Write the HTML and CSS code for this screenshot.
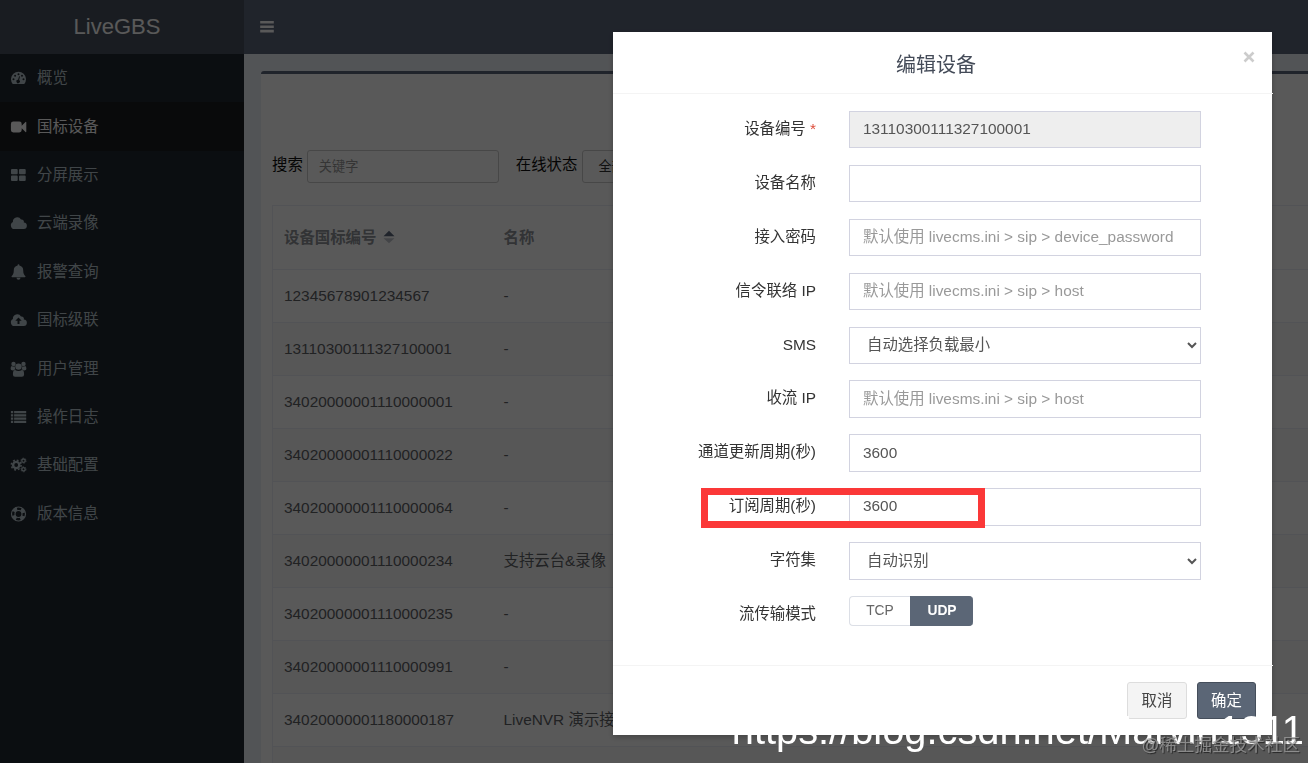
FILE: index.html
```
<!DOCTYPE html>
<html lang="zh-CN">
<head>
    <meta charset="utf-8" />
    <meta name="viewport" content="width=device-width, initial-scale=1" />
    <title>LiveGBS</title>
    <link rel="stylesheet" href="styles.css">
</head>
<body>
    <div class="wrapper">
        <aside class="sidebar">
            <a class="logo">LiveGBS</a>
            <ul class="menu">
                <li>
                    <svg class="icon" viewBox="0 0 16 16"><path fill-rule="evenodd" d="M2.2 14A7.5 7.5 0 1 1 13.8 14zM3 8.3a1 1 0 1 0 0 2 1 1 0 0 0 0-2zM4.6 4.8a1 1 0 1 0 0 2 1 1 0 0 0 0-2zM8 3.2a1 1 0 1 0 0 2 1 1 0 0 0 0-2zM11.5 4.8a1 1 0 1 0 0 2 1 1 0 0 0 0-2zM13 8.3a1 1 0 1 0 0 2 1 1 0 0 0 0-2zM8.6 6.2L7.6 9.8a1.7 1.7 0 1 0 1 .3L9.5 6.5z"/></svg>
                    <span>概览</span>
                </li>
                <li class="active">
                    <svg class="icon" viewBox="0 0 16 16"><path d="M2.800 2.600h6a2.400 2.400 0 0 1 2.400 2.400v1.700L15 3q.8-.5.8.4v9.200q0 .9-.8.4l-3.800-3.700V11a2.400 2.400 0 0 1-2.400 2.400h-6A2.400 2.400 0 0 1 .4 11V5a2.400 2.400 0 0 1 2.400-2.400z"/></svg>
                    <span>国标设备</span>
                </li>
                <li>
                    <svg class="icon" viewBox="0 0 16 16"><path d="M1.500 2h4.700q1 0 1 1v3.300q0 1-1 1H1.500q-1 0-1-1V3q0-1 1-1zM9.500 2h4.700q1 0 1 1v3.300q0 1-1 1H9.500q-1 0-1-1V3q0-1 1-1zM1.500 8.600h4.700q1 0 1 1V13q0 1-1 1H1.500q-1 0-1-1V9.600q0-1 1-1zM9.500 8.600h4.700q1 0 1 1V13q0 1-1 1H9.500q-1 0-1-1V9.600q0-1 1-1z"/></svg>
                    <span>分屏展示</span>
                </li>
                <li>
                    <svg class="icon" viewBox="0 0 16 16"><path d="M4 14A3.700 3.700 0 0 1 2.400 7 4.300 4.300 0 0 1 10.500 4.600 2.300 2.300 0 0 1 13.300 7.600 3.200 3.200 0 0 1 13 14z"/></svg>
                    <span>云端录像</span>
                </li>
                <li>
                    <svg class="icon" viewBox="0 0 16 16"><path d="M8 .3q1 0 .9 1.200C11.600 2 12.700 4 12.700 6.200c0 3.200.9 4.900 2.300 6 0 .7-.4 1.100-1 1.100H2c-.6 0-1-.4-1-1.100 1.400-1.100 2.300-2.800 2.300-6C3.300 4 4.400 2 7.100 1.500Q7 .3 8 .3zM6 13.800h4a2 2 0 0 1-4 0z"/></svg>
                    <span>报警查询</span>
                </li>
                <li>
                    <svg class="icon" viewBox="0 0 16 16"><path fill-rule="evenodd" d="M4 14A3.700 3.700 0 0 1 2.400 7 4.300 4.300 0 0 1 10.500 4.600 2.300 2.300 0 0 1 13.300 7.600 3.200 3.200 0 0 1 13 14zM8 5.400L4.800 8.700h2.200V12h2V8.700h2.200z"/></svg>
                    <span>国标级联</span>
                </li>
                <li>
                    <svg class="icon" viewBox="0 0 16 16"><circle cx="3" cy="2.900" r="2.200"/><circle cx="13" cy="2.900" r="2.200"/><circle cx="8" cy="5.600" r="3.200"/><path d="M.1 8q0-3 1.300-3 1.400.9 3 .4-.3 1.900.7 3-1.400 0-2.300 1-2.700.1-2.700-1.400zM15.900 8q0-3-1.300-3-1.400.9-3 .4.3 1.900-.7 3 1.400 0 2.300 1 2.700.1 2.700-1.400zM4.600 9q3.400 2 6.800 0 2.200 0 2.200 4.400 0 2.300-2.200 2.300H4.600q-2.200 0-2.200-2.300Q2.400 9 4.600 9z"/></svg>
                    <span>用户管理</span>
                </li>
                <li>
                    <svg class="icon" viewBox="0 0 16 16"><path d="M.4 2h2.300v2.200H.4zM3.600 2h12.100v2.200H3.600zM.4 5.200h2.300v2.300H.4zM3.600 5.200h12.100v2.300H3.600zM.4 8.500h2.300v2.300H.4zM3.600 8.500h12.100v2.300H3.600zM.4 11.800h2.300V14H.4zM3.600 11.800h12.100V14H3.600z"/></svg>
                    <span>操作日志</span>
                </li>
                <li>
                    <svg class="icon line" viewBox="0 0 16 16"><circle cx="5.700" cy="8" r="3.100" stroke-width="2.400"/><circle cx="5.700" cy="8" r="4.900" stroke-width="1.500" stroke-dasharray="1.920 1.920"/><circle cx="13" cy="3.700" r="1.700" stroke-width="1.400"/><circle cx="13" cy="3.700" r="2.600" stroke-width=".8" stroke-dasharray="1.360 1.360"/><circle cx="13" cy="12.300" r="1.700" stroke-width="1.400"/><circle cx="13" cy="12.300" r="2.600" stroke-width=".8" stroke-dasharray="1.360 1.360"/></svg>
                    <span>基础配置</span>
                </li>
                <li>
                    <svg class="icon line" viewBox="0 0 16 16"><circle cx="8" cy="8" r="7" stroke-width="1.200"/><circle cx="8" cy="8" r="3.500" stroke-width="1.200"/><circle cx="8" cy="8" r="5.300" stroke-width="3.200" stroke-dasharray="4.160 4.160" stroke-dashoffset="-2.080"/></svg>
                    <span>版本信息</span>
                </li>
            </ul>
        </aside>

        <div class="main">
            <header class="navbar">
                <svg class="toggle" viewBox="0 0 14 12"><path d="M.2 0h13.600v2.600H.2zM.2 4.400h13.600V7H.2zM.2 8.800h13.600v2.600H.2z"/></svg>
            </header>
            <section class="box">
                <div class="filters">
                    <label for="keyword">搜索</label>
                    <input type="text" id="keyword" class="keyword" placeholder="关键字" />
                    <label for="online">在线状态</label>
                    <select id="online" class="online"><option>全部</option></select>
                </div>
                <div class="table">
                    <div class="tr th">
                        <div class="td">设备国标编号
                            <svg class="sort" viewBox="0 0 12 14"><path class="asc" d="M.5 6.200L6 .7l5.500 5.500z"/><path class="desc" d="M.5 8.200h11L6 13.200z"/></svg>
                        </div>
                        <div class="td name">名称</div>
                    </div>
                    <div class="tr"><div class="td">12345678901234567</div><div class="td">-</div></div>
                    <div class="tr"><div class="td">13110300111327100001</div><div class="td">-</div></div>
                    <div class="tr"><div class="td">34020000001110000001</div><div class="td">-</div></div>
                    <div class="tr"><div class="td">34020000001110000022</div><div class="td">-</div></div>
                    <div class="tr"><div class="td">34020000001110000064</div><div class="td">-</div></div>
                    <div class="tr"><div class="td">34020000001110000234</div><div class="td">支持云台&amp;录像</div></div>
                    <div class="tr"><div class="td">34020000001110000235</div><div class="td">-</div></div>
                    <div class="tr"><div class="td">34020000001110000991</div><div class="td">-</div></div>
                    <div class="tr"><div class="td">34020000001180000187</div><div class="td">LiveNVR 演示接</div></div>
                    <div class="tr"></div>
                </div>
            </section>
        </div>
    </div>

    <div class="backdrop"></div>

    <div class="modal">
        <div class="modal-header">
            <h4>编辑设备</h4>
            <button class="close" aria-label="Close"><svg viewBox="0 0 12 12"><path d="M1.500 1.500l9 9M10.500 1.500l-9 9"/></svg></button>
        </div>
        <div class="modal-body">
            <div class="form-group">
                <label>设备编号 <span class="required">*</span></label>
                <input class="form-control" type="text" value="13110300111327100001" disabled />
            </div>
            <div class="form-group">
                <label>设备名称</label>
                <input class="form-control" type="text" />
            </div>
            <div class="form-group">
                <label>接入密码</label>
                <input class="form-control" type="text" placeholder="默认使用 livecms.ini &gt; sip &gt; device_password" />
            </div>
            <div class="form-group">
                <label>信令联络 IP</label>
                <input class="form-control" type="text" placeholder="默认使用 livecms.ini &gt; sip &gt; host" />
            </div>
            <div class="form-group">
                <label>SMS</label>
                <select class="form-control"><option>自动选择负载最小</option></select>
            </div>
            <div class="form-group">
                <label>收流 IP</label>
                <input class="form-control" type="text" placeholder="默认使用 livesms.ini &gt; sip &gt; host" />
            </div>
            <div class="form-group">
                <label>通道更新周期(秒)</label>
                <input class="form-control" type="text" value="3600" />
            </div>
            <div class="form-group">
                <label>订阅周期(秒)</label>
                <input class="form-control" type="text" value="3600" />
                <div class="highlight"></div>
            </div>
            <div class="form-group">
                <label>字符集</label>
                <select class="form-control"><option>自动识别</option></select>
            </div>
            <div class="form-group">
                <label>流传输模式</label>
                <div class="switch">
                    <span>TCP</span>
                    <span class="on">UDP</span>
                </div>
            </div>
        </div>
        <div class="modal-footer">
            <button class="btn">取消</button>
            <button class="btn btn-primary">确定</button>
        </div>
    </div>

    <div class="watermark">https://blog.csdn.net/Marvin1311</div>
    <div class="community">@稀土掘金技术社区</div>
</body>
</html>
```
FILE: styles.css
```
* { box-sizing: border-box; margin: 0; padding: 0; }
body {
    height: 763px;
    overflow: hidden;
    font-family: "Liberation Sans", "Noto Sans CJK SC", sans-serif;
    font-size: 15.4px;
    line-height: 22px;
    color: #333;
}
input, select, button {
    font-family: inherit;
    font-size: inherit;
}
.wrapper {
    display: flex;
    height: 763px;
    background: #ecf0f5;
}

/* sidebar */
.sidebar {
    width: 244px;
    flex: none;
    background: #222831;
}
.logo {
    display: block;
    height: 54px;
    line-height: 53px;
    padding-right: 10px;
    text-align: center;
    font-size: 22px;
    color: #fff;
    background: #48525e;
}
.menu {
    list-style: none;
}
.menu li {
    display: flex;
    align-items: center;
    height: 48.400px;
    padding-left: 10px;
    color: #b8c7ce;
}
.menu li.active {
    color: #fff;
    background: #1a1d20;
}
.icon {
    width: 17px;
    height: 16px;
    margin-right: 10px;
    fill: currentColor;
}
.icon.line {
    fill: none;
    stroke: currentColor;
}

/* content */
.main {
    flex: 1;
    min-width: 0;
}
.navbar {
    display: flex;
    align-items: center;
    height: 54px;
    padding-left: 16px;
    background: #5d677d;
}
.toggle {
    width: 14px;
    height: 12px;
    fill: #fff;
}
.box {
    height: 720px;
    margin: 17px 0 0 17px;
    padding: 76px 0 0 11px;
    background: #fff;
    border-top: 3px solid #5d677d;
    border-radius: 3px 0 0 0;
}
.filters {
    display: flex;
    height: 33px;
    line-height: 30px;
    color: #111;
}
.keyword, .online {
    height: 33px;
    padding: 0 11px;
    font-size: 13.200px;
    border: 1px solid #ccc;
    border-radius: 3px;
    background: #fff;
    color: #333;
}
.keyword {
    width: 192px;
    margin: 0 17px 0 4px;
}
.keyword::placeholder {
    color: #999;
}
.online {
    width: 120px;
    margin-left: 5px;
}
.table {
    margin-top: 22px;
    border-top: 1px solid #ebeef5;
    border-left: 1px solid #ebeef5;
}
.tr {
    display: flex;
    align-items: center;
    height: 53px;
    border-bottom: 1px solid #ebeef5;
    color: #606266;
}
.tr:nth-child(odd) {
    background: #fafafa;
}
.tr.th {
    height: 64px;
    background: #fff;
    font-weight: bold;
    color: #909399;
}
.td {
    display: flex;
    align-items: center;
    width: 219.500px;
    padding-left: 11px;
    white-space: nowrap;
}
.sort {
    width: 12px;
    height: 14px;
    margin: 0 0 2px 7px;
}
.sort .asc {
    fill: #5d677d;
}
.sort .desc {
    fill: #c0c4cc;
}

.backdrop {
    position: fixed;
    inset: 0;
    background: rgba(0, 0, 0, 0.65);
}

/* edit dialog */
.modal {
    position: fixed;
    left: 613px;
    top: 32px;
    width: 659px;
    height: 703px;
    background: #fff;
    box-shadow: 0 2px 6px rgba(0, 0, 0, 0.25);
}
.modal-header {
    display: flex;
    height: 62px;
    margin-right: -1px;
    padding-right: 14px;
    align-items: center;
    justify-content: center;
    border-bottom: 1px solid #f4f4f4;
}
.modal-header h4 {
    font-size: 20px;
    font-weight: normal;
    color: #444b58;
    padding-top: 4px;
}
.close {
    position: absolute;
    right: 17px;
    top: 19px;
    width: 12px;
    height: 12px;
    border: none;
    background: none;
}
.close svg {
    display: block;
    stroke: #ccc;
    stroke-width: 2.600;
}
.modal-body {
    height: 572px;
    padding-top: 17px;
    margin-right: -1px;
    border-bottom: 1px solid #f4f4f4;
}
.form-group {
    position: relative;
    display: flex;
    height: 37.400px;
    margin-bottom: 16.500px;
}
.form-group label {
    width: 203px;
    margin-right: 33px;
    line-height: 36px;
    text-align: right;
}
.required {
    color: #dd4b39;
}
.form-control {
    width: 352px;
    height: 37.400px;
    padding: 0 13px 1px;
    border: 1px solid #d2d3e0;
    border-radius: 0;
    background: #fff;
    color: #555;
}
.form-control:disabled {
    background: #eee;
}
.form-control::placeholder {
    color: #999;
}
.highlight {
    position: absolute;
    left: 88px;
    top: 0;
    width: 284px;
    height: 40px;
    border: 7px solid #fb3838;
}
.switch {
    display: flex;
    height: 30px;
    line-height: 27px;
    font-size: 13.800px;
    text-align: center;
    color: #666;
}
.switch span {
    width: 61px;
    border: 1px solid #dcdfe6;
    border-right: none;
    border-radius: 4px 0 0 4px;
}
.switch .on {
    width: 63px;
    color: #fff;
    font-weight: bold;
    background: #5b6676;
    border-color: #5b6676;
    border-radius: 0 4px 4px 0;
}
.modal-footer {
    display: flex;
    justify-content: flex-end;
    gap: 10px;
    padding: 16px 16px 0 0;
}
.btn {
    width: 60px;
    height: 37px;
    padding-bottom: 3px;
    border: 1px solid #ddd;
    border-radius: 3px;
    background: #f4f4f4;
    color: #444;
}
.btn-primary {
    width: 59px;
    background: #5b6676;
    border-color: #454e5b;
    color: #fff;
}

.watermark {
    position: fixed;
    right: 4px;
    top: 707px;
    line-height: 46px;
    font-size: 39.800px;
    color: #fff;
}
.community {
    position: fixed;
    right: 8px;
    top: 734px;
    font-size: 17.600px;
    color: rgba(160, 160, 160, 0.75);
    text-shadow: 1px 1px 1px rgba(0, 0, 0, 0.6);
}
```
